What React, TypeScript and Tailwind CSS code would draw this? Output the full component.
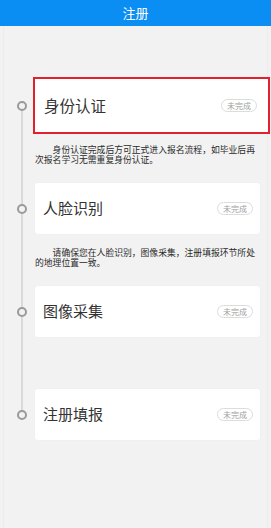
import React from 'react';

interface Step {
    title: string;
    desc?: string;
    active?: boolean;
}

const STEPS: Step[] = [
    { title: '身份认证', desc: '身份认证完成后方可正式进入报名流程，如毕业后再次报名学习无需重复身份认证。', active: true },
    { title: '人脸识别', desc: '请确保您在人脸识别，图像采集，注册填报环节所处的地理位置一致。' },
    { title: '图像采集', desc: '' },
    { title: '注册填报' },
];

function Badge() {
    return (
        <span className="rounded-full border border-[#dcdcdc] px-[5px] py-[0.5px] text-[8px] leading-[10px] text-[#a0a0a0]">
            未完成
        </span>
    );
}

export default function App() {
    return (
        <div
            className="min-h-[528px] bg-[#f2f2f2] flex flex-col"
            style={{ fontFamily: '"Noto Sans CJK SC", "Noto Sans", sans-serif' }}
        >
            <div className="h-[26px] bg-[#0a8ef4] flex items-center justify-center text-white text-[13px]">
                注册
            </div>

            <div className="flex-1 mx-[3px] border-x border-[#ececec] pt-[54px]">
                {STEPS.map((step, i) => {
                    const first = i === 0;
                    const last = i === STEPS.length - 1;
                    return (
                        <div key={step.title}>
                            <div className="flex h-[51px]">
                                <div className="w-[31px] flex flex-col items-center pl-[4px]">
                                    <div className={`flex-1 w-[2px] ${first ? '' : 'bg-[#dadada]'}`} />
                                    <div className="w-[10px] h-[10px] rounded-full border-2 border-[#9a9a9a]" />
                                    <div className={`flex-1 w-[2px] ${last ? '' : 'bg-[#dadada]'}`} />
                                </div>
                                {step.active ? (
                                    <div className="flex-1 -my-[3px] ml-[-2px] mr-[-3px] bg-white border-2 border-[#e1222d] flex items-center justify-between pl-[9px] pr-[11px]">
                                        <span className="text-[15.5px] text-[#333]">{step.title}</span>
                                        <Badge />
                                    </div>
                                ) : (
                                    <div className="flex-1 mr-[7px] bg-white rounded-[3px] shadow-[0_0_2px_rgba(0,0,0,0.04)] flex items-center justify-between pl-[8px] pr-[7px]">
                                        <span className="text-[15px] text-[#333]">{step.title}</span>
                                        <Badge />
                                    </div>
                                )}
                            </div>
                            {!last && (
                                <div className="flex h-[52px]">
                                    <div className="w-[31px] flex justify-center pl-[4px]">
                                        <div className="w-[2px] bg-[#dadada]" />
                                    </div>
                                    <p className="flex-1 mr-[7px] pt-[14px] text-[8.8px] leading-[10px] text-[#2a2a2a] indent-[2em]">
                                        {step.desc}
                                    </p>
                                </div>
                            )}
                        </div>
                    );
                })}
            </div>
        </div>
    );
}
